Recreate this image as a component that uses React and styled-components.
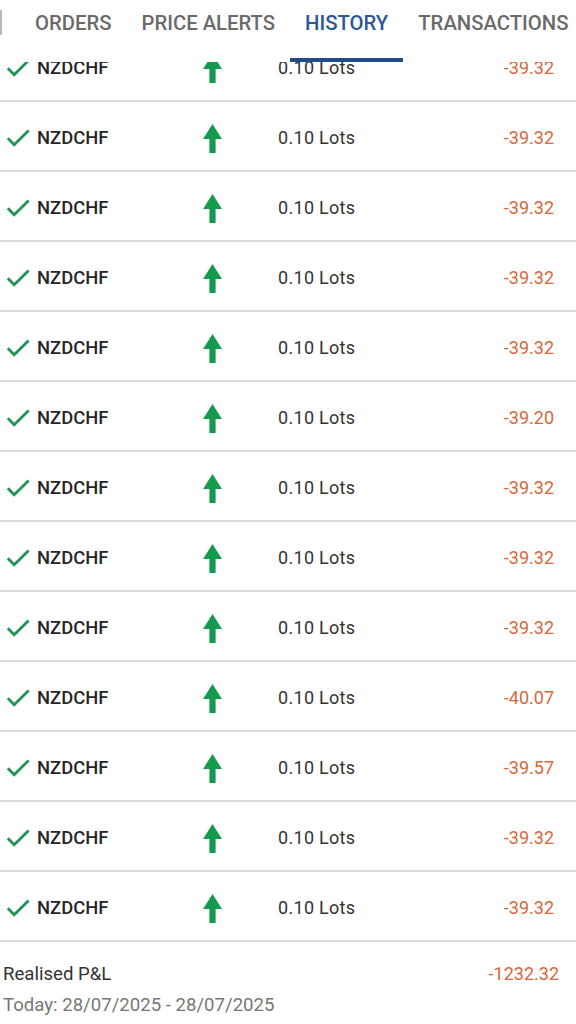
import styled, { createGlobalStyle } from 'styled-components';

const GlobalStyle = createGlobalStyle`
  html, body {
    margin: 0;
    padding: 0;
    background: #ffffff;
    overflow: hidden;
  }
  body {
    font-family: Roboto, 'Noto Sans', 'Liberation Sans', sans-serif;
    -webkit-font-smoothing: antialiased;
  }
`;

const Page = styled.div`
  width: 576px;
  height: 1024px;
  display: flex;
  flex-direction: column;
  background: #fff;
  overflow: hidden;
`;

const TabBar = styled.div`
  position: relative;
  z-index: 2;
  flex: 0 0 62px;
  display: flex;
  align-items: flex-start;
  background: #fff;
  white-space: nowrap;
  overflow: hidden;
`;

const EdgeMark = styled.div`
  flex: 0 0 2px;
  height: 25px;
  margin: 10px 18px 0 0;
  background: #b8b8b8;
`;

const Tab = styled.div`
  position: relative;
  height: 62px;
  box-sizing: border-box;
  padding: 11px 15px 0;
  font-size: 20.3px;
  line-height: 24px;
  font-weight: 500;
  color: ${(props) => (props.active ? '#2a5796' : '#6a6a6a')};
`;

const Indicator = styled.div`
  position: absolute;
  left: 0;
  right: 0;
  bottom: 0;
  height: 4px;
  background: #1f4d8c;
`;

const ListViewport = styled.div`
  flex: 0 0 auto;
  overflow: hidden;
`;

const List = styled.div`
  margin-top: -30px;
`;

const Row = styled.div`
  display: grid;
  grid-template-columns: 31px 166px 75px 1fr auto;
  align-items: center;
  height: 70px;
  box-sizing: border-box;
  padding: 3px 22px 0 6px;
  border-bottom: 2px solid #dadada;
`;

const Symbol = styled.div`
  font-size: 18.4px;
  line-height: 22px;
  font-weight: 500;
  color: #262626;
`;

const Lots = styled.div`
  font-size: 18px;
  line-height: 22px;
  color: #333;
  letter-spacing: 0.3px;
`;

const Amount = styled.div`
  font-size: 18px;
  line-height: 22px;
  color: #d8673b;
  text-align: right;
`;

const Summary = styled.div`
  display: flex;
  flex-direction: column;
  gap: 7px;
  padding: 20px 17px 0 3px;
`;

const SummaryLine = styled.div`
  display: flex;
  justify-content: space-between;
  font-size: 18.6px;
  line-height: 24px;
  color: ${(props) => props.color || '#333'};
`;

const SummaryValue = styled.span`
  color: #d8673b;
  font-size: 18px;
`;

const trades = [
  '-39.32', '-39.32', '-39.32', '-39.32', '-39.32', '-39.20', '-39.32',
  '-39.32', '-39.32', '-40.07', '-39.57', '-39.32', '-39.32',
];

function CheckIcon() {
  return (
    <svg width="24" height="18" viewBox="0 0 24 18">
      <path d="M1.8 9.3 L8.2 15.7 L22.6 1.4" fill="none" stroke="#1f9456" strokeWidth="2.8" />
    </svg>
  );
}

function UpArrow() {
  return (
    <svg width="19" height="29" viewBox="0 0 19 29" style={{ display: 'block', marginTop: 2 }}>
      <path d="M9.5 0 L19 15 L12.6 15 L12.6 29 L6.4 29 L6.4 15 L0 15 Z" fill="#149a4c" />
    </svg>
  );
}

export default function App() {
  return (
    <Page>
      <GlobalStyle />
      <TabBar>
        <EdgeMark />
        <Tab>ORDERS</Tab>
        <Tab>PRICE ALERTS</Tab>
        <Tab active>
          HISTORY
          <Indicator />
        </Tab>
        <Tab>TRANSACTIONS</Tab>
      </TabBar>
      <ListViewport>
        <List>
          {trades.map((pl, i) => (
            <Row key={i}>
              <CheckIcon />
              <Symbol>NZDCHF</Symbol>
              <UpArrow />
              <Lots>0.10 Lots</Lots>
              <Amount>{pl}</Amount>
            </Row>
          ))}
        </List>
      </ListViewport>
      <Summary>
        <SummaryLine>
          <span>Realised P&amp;L</span>
          <SummaryValue>-1232.32</SummaryValue>
        </SummaryLine>
        <SummaryLine color="#777">Today: 28/07/2025 - 28/07/2025</SummaryLine>
      </Summary>
    </Page>
  );
}
